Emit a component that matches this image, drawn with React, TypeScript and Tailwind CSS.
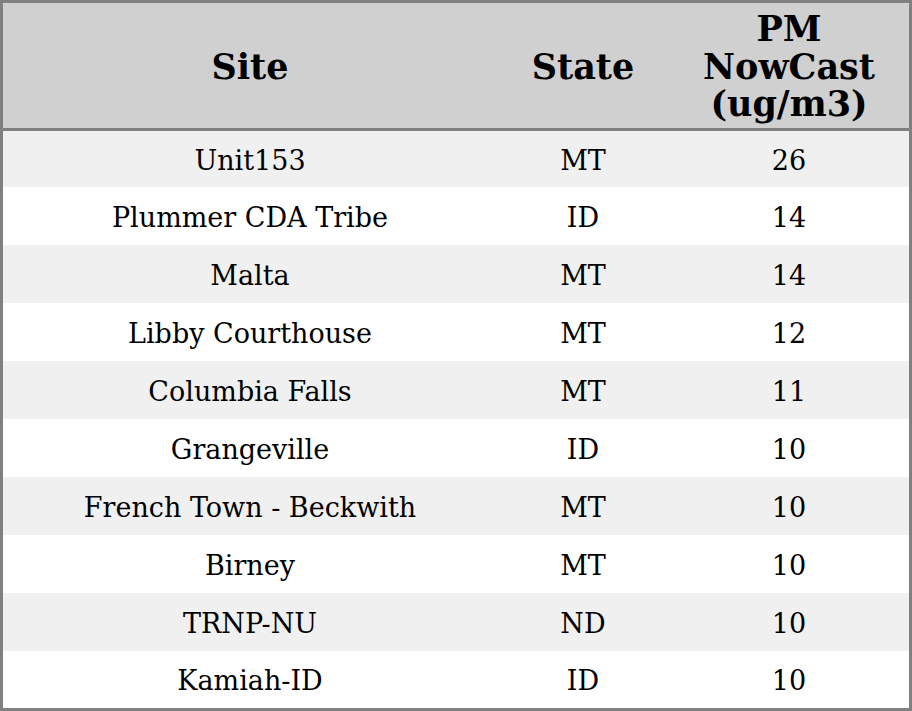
import React from "react";

const rows: [string, string, string][] = [
  ["Unit153", "MT", "26"],
  ["Plummer CDA Tribe", "ID", "14"],
  ["Malta", "MT", "14"],
  ["Libby Courthouse", "MT", "12"],
  ["Columbia Falls", "MT", "11"],
  ["Grangeville", "ID", "10"],
  ["French Town - Beckwith", "MT", "10"],
  ["Birney", "MT", "10"],
  ["TRNP-NU", "ND", "10"],
  ["Kamiah-ID", "ID", "10"],
];

export default function App() {
  return (
    <div
      className="w-[912px] h-[711px] bg-white text-black"
      style={{ fontFamily: '"DejaVu Serif", serif' }}
    >
      <div className="w-[912px] h-[711px] border-[3px] border-[#808080] flex flex-col">
        <div className="h-[128px] pt-[2px] bg-[#d0d0d0] border-b-[3px] border-[#808080] grid grid-cols-[494px_172px_240px] items-center font-bold text-[35px] leading-[37.5px] text-center">
          <div>Site</div>
          <div>State</div>
          <div>
            PM
            <br />
            NowCast
            <br />
            (ug/m3)
          </div>
        </div>
        {rows.map((r, i) => {
          const h = i === 0 ? "h-[56px]" : i === rows.length - 1 ? "h-[57px]" : "h-[58px]";
          const bg = i % 2 === 0 ? "bg-[#f0f0f0]" : "bg-white";
          return (
            <div
              key={i}
              className={`${h} ${bg} pt-[4px] grid grid-cols-[494px_172px_240px] items-center text-center text-[27px]`}
            >
              <div>{r[0]}</div>
              <div>{r[1]}</div>
              <div>{r[2]}</div>
            </div>
          );
        })}
      </div>
    </div>
  );
}
